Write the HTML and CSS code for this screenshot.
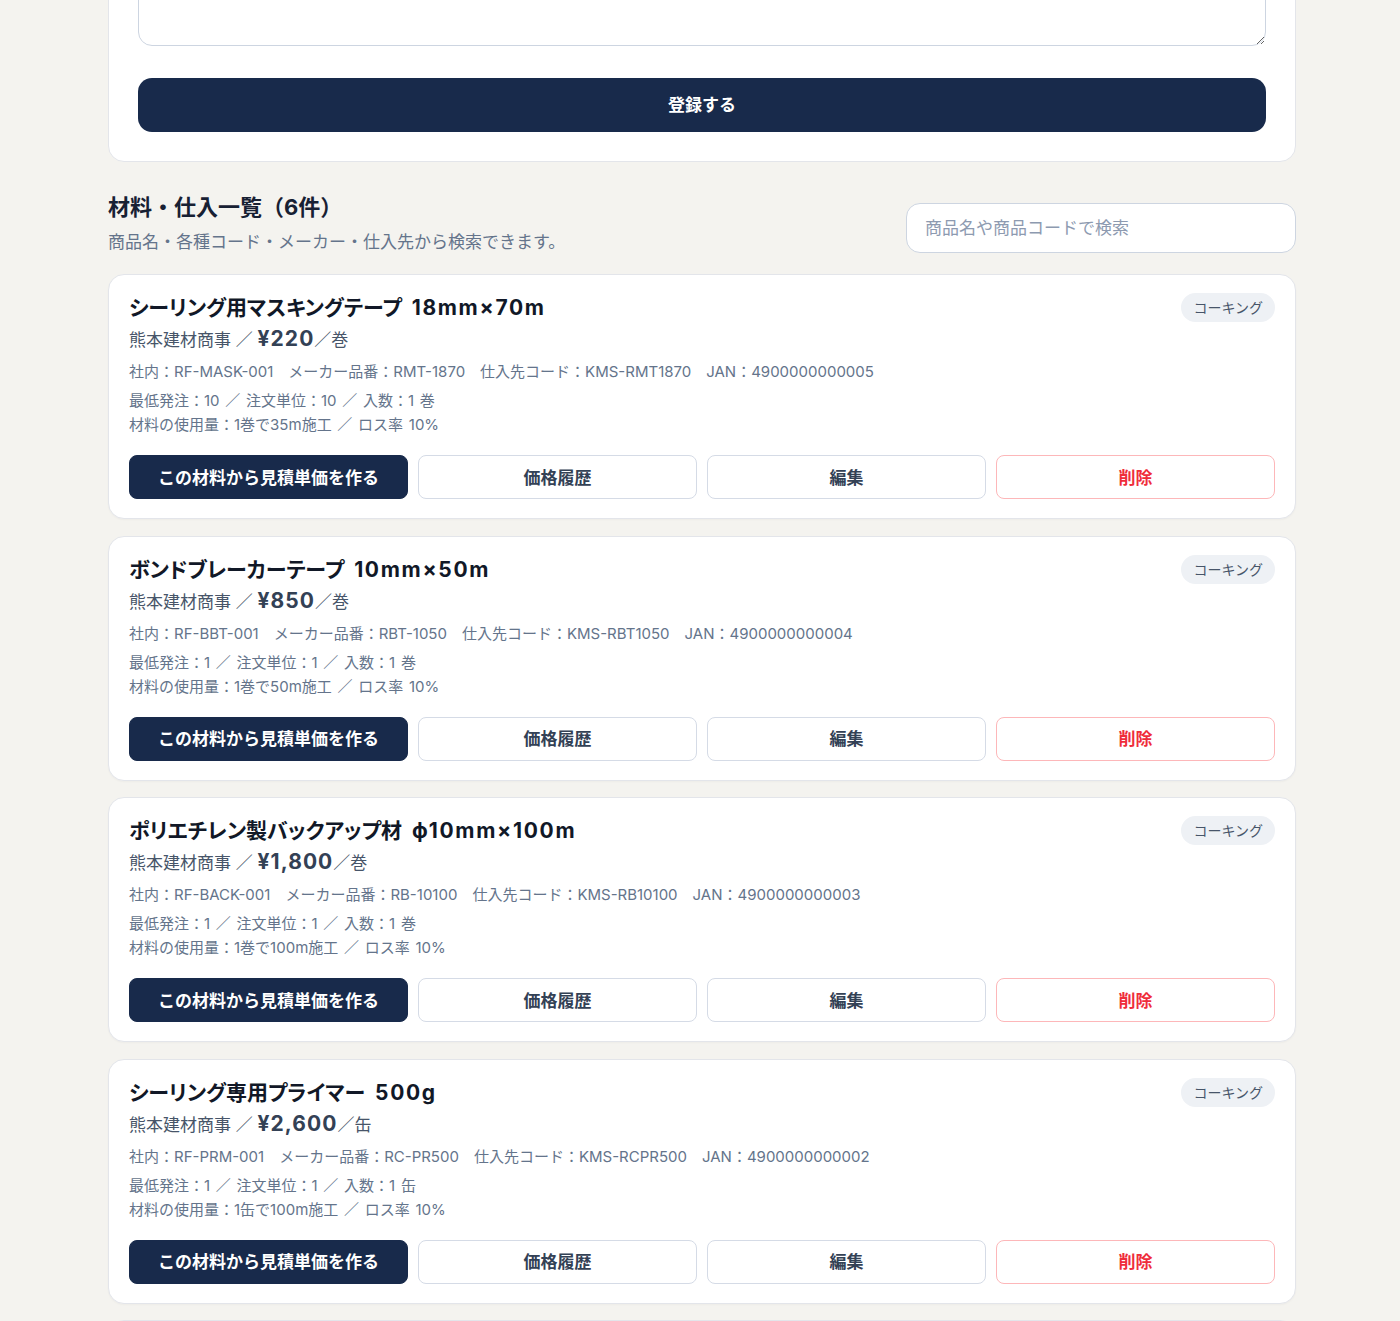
FILE: index.html
```html
<!DOCTYPE html>
<html lang="ja">
<head>
<meta charset="utf-8">
<title>材料・仕入一覧</title>
<link rel="stylesheet" href="styles.css">
</head>
<body>
<main class="page">
  <section class="form-card">
    <textarea class="memo" aria-label="メモ"></textarea>
    <button class="btn-submit" type="button">登録する</button>
  </section>

  <section class="list-head">
    <div class="list-title">
      <h2>材料・仕入一覧（6件）</h2>
      <p>商品名・各種コード・メーカー・仕入先から検索できます。</p>
    </div>
    <input class="search" type="text" placeholder="商品名や商品コードで検索">
  </section>

  <ul class="items">
    <li class="item">
      <div class="item-top">
        <h3>シーリング用マスキングテープ <span class="spec">18mm×70m</span></h3>
        <span class="tag">コーキング</span>
      </div>
      <p class="price">熊本建材商事 ／ <b>¥220</b>／巻</p>
      <p class="codes"><span>社内：RF-MASK-001</span><span>メーカー品番：RMT-1870</span><span>仕入先コード：KMS-RMT1870</span><span>JAN：4900000000005</span></p>
      <p class="meta">最低発注：10 ／ 注文単位：10 ／ 入数：1 巻</p>
      <p class="meta">材料の使用量：1巻で35m施工 ／ ロス率 10%</p>
      <div class="actions">
        <button class="btn btn-primary" type="button">この材料から見積単価を作る</button>
        <button class="btn" type="button">価格履歴</button>
        <button class="btn" type="button">編集</button>
        <button class="btn btn-danger" type="button">削除</button>
      </div>
    </li>
    <li class="item">
      <div class="item-top">
        <h3>ボンドブレーカーテープ <span class="spec">10mm×50m</span></h3>
        <span class="tag">コーキング</span>
      </div>
      <p class="price">熊本建材商事 ／ <b>¥850</b>／巻</p>
      <p class="codes"><span>社内：RF-BBT-001</span><span>メーカー品番：RBT-1050</span><span>仕入先コード：KMS-RBT1050</span><span>JAN：4900000000004</span></p>
      <p class="meta">最低発注：1 ／ 注文単位：1 ／ 入数：1 巻</p>
      <p class="meta">材料の使用量：1巻で50m施工 ／ ロス率 10%</p>
      <div class="actions">
        <button class="btn btn-primary" type="button">この材料から見積単価を作る</button>
        <button class="btn" type="button">価格履歴</button>
        <button class="btn" type="button">編集</button>
        <button class="btn btn-danger" type="button">削除</button>
      </div>
    </li>
    <li class="item">
      <div class="item-top">
        <h3>ポリエチレン製バックアップ材 <span class="spec">ϕ10mm×100m</span></h3>
        <span class="tag">コーキング</span>
      </div>
      <p class="price">熊本建材商事 ／ <b>¥1,800</b>／巻</p>
      <p class="codes"><span>社内：RF-BACK-001</span><span>メーカー品番：RB-10100</span><span>仕入先コード：KMS-RB10100</span><span>JAN：4900000000003</span></p>
      <p class="meta">最低発注：1 ／ 注文単位：1 ／ 入数：1 巻</p>
      <p class="meta">材料の使用量：1巻で100m施工 ／ ロス率 10%</p>
      <div class="actions">
        <button class="btn btn-primary" type="button">この材料から見積単価を作る</button>
        <button class="btn" type="button">価格履歴</button>
        <button class="btn" type="button">編集</button>
        <button class="btn btn-danger" type="button">削除</button>
      </div>
    </li>
    <li class="item">
      <div class="item-top">
        <h3>シーリング専用プライマー <span class="spec">500g</span></h3>
        <span class="tag">コーキング</span>
      </div>
      <p class="price">熊本建材商事 ／ <b>¥2,600</b>／缶</p>
      <p class="codes"><span>社内：RF-PRM-001</span><span>メーカー品番：RC-PR500</span><span>仕入先コード：KMS-RCPR500</span><span>JAN：4900000000002</span></p>
      <p class="meta">最低発注：1 ／ 注文単位：1 ／ 入数：1 缶</p>
      <p class="meta">材料の使用量：1缶で100m施工 ／ ロス率 10%</p>
      <div class="actions">
        <button class="btn btn-primary" type="button">この材料から見積単価を作る</button>
        <button class="btn" type="button">価格履歴</button>
        <button class="btn" type="button">編集</button>
        <button class="btn btn-danger" type="button">削除</button>
      </div>
    </li>
    <li class="item">
      <div class="item-top">
        <h3>変成シリコン系シーリング材 <span class="spec">320ml</span></h3>
        <span class="tag">コーキング</span>
      </div>
      <p class="price">熊本建材商事 ／ <b>¥680</b>／本</p>
      <p class="codes"><span>社内：RF-MS-001</span><span>メーカー品番：MS-320</span><span>仕入先コード：KMS-MS320</span><span>JAN：4900000000001</span></p>
      <p class="meta">最低発注：10 ／ 注文単位：10 ／ 入数：1 本</p>
      <p class="meta">材料の使用量：1本で8m施工 ／ ロス率 10%</p>
      <div class="actions">
        <button class="btn btn-primary" type="button">この材料から見積単価を作る</button>
        <button class="btn" type="button">価格履歴</button>
        <button class="btn" type="button">編集</button>
        <button class="btn btn-danger" type="button">削除</button>
      </div>
    </li>
  </ul>
</main>
</body>
</html>
```

FILE: styles.css
```css
* {
  box-sizing: border-box;
}

html,
body {
  margin: 0;
  padding: 0;
  background: #f4f3ef;
  font-family: Inter, "Noto Sans CJK JP", "Noto Sans", sans-serif;
  color: #1e293b;
}

.page {
  width: 1188px;
  margin: -76px auto 0 108px;
  display: flex;
  flex-direction: column;
}

/* entry form (scrolled to its bottom) */
.form-card {
  background: #fff;
  border: 1px solid #e3e5ea;
  border-radius: 16px;
  padding: 0 29px 29px;
  display: flex;
  flex-direction: column;
  gap: 32px;
}

.memo {
  display: block;
  width: 100%;
  height: 121px;
  border: 1px solid #cdd5e1;
  border-radius: 14px;
  font: inherit;
  resize: vertical;
}

.btn-submit {
  height: 54px;
  padding: 0 0 3px;
  border: 0;
  border-radius: 14px;
  background: #182a4b;
  color: #fff;
  font-family: inherit;
  font-size: 17px;
  font-weight: 700;
}

/* list header */
.list-head {
  display: flex;
  justify-content: space-between;
  align-items: flex-end;
  margin-top: 29px;
}

.list-title h2 {
  margin: 0;
  height: 32px;
  font-size: 22px;
  line-height: 32px;
  font-weight: 700;
  color: #172033;
}

.list-title p {
  margin: 6px 0 0;
  height: 26px;
  font-size: 17px;
  line-height: 26px;
  color: #64748b;
}

.search {
  width: 390px;
  height: 50px;
  margin-bottom: 2px;
  border: 1px solid #cdd5e1;
  border-radius: 14px;
  background: #fff;
  padding: 0 18px;
  font-family: inherit;
  font-size: 17px;
}

.search::placeholder {
  color: #8d9ab0;
}

/* material cards */
.items {
  list-style: none;
  margin: 19px 0 0;
  padding: 0;
  display: flex;
  flex-direction: column;
  gap: 16.5px;
}

.item {
  background: #fff;
  border: 1px solid #e3e5ea;
  border-radius: 16px;
  padding: 18px 20px 19px;
  box-shadow: 0 1px 2px rgba(15, 23, 42, 0.03);
}

.item p {
  margin: 0;
}

.item-top {
  display: flex;
  justify-content: space-between;
  align-items: flex-start;
  height: 30px;
}

.item-top h3 {
  margin: 0;
  font-size: 21px;
  line-height: 30px;
  font-weight: 700;
  color: #111827;
  font-feature-settings: "palt";
  word-spacing: 5px;
}

.spec {
  letter-spacing: 0.08em;
}

.tag {
  background: #eef1f5;
  color: #475569;
  border-radius: 999px;
  font-size: 14px;
  line-height: 29px;
  height: 29px;
  padding: 0 12px;
}

.item .price {
  margin-top: 3px;
  height: 28px;
  font-size: 17px;
  line-height: 28px;
  color: #475569;
}

.price b {
  color: #334155;
  font-weight: 700;
  font-size: 21px;
  line-height: 1;
  letter-spacing: 0.05em;
}

.item .codes {
  margin-top: 6px;
  height: 24px;
  font-size: 15px;
  line-height: 24px;
  color: #64748b;
  display: flex;
  gap: 15px;
}

.item .meta {
  height: 24px;
  font-size: 15px;
  line-height: 24px;
  word-spacing: 1.5px;
  color: #64748b;
}

.item .codes + .meta {
  margin-top: 5px;
}

.actions {
  margin-top: 18px;
  display: grid;
  grid-template-columns: repeat(4, 1fr);
  gap: 10px;
}

.btn {
  height: 44px;
  padding: 0 0 2px;
  border: 1px solid #d5dbe6;
  border-radius: 8px;
  background: #fff;
  color: #334155;
  font-family: inherit;
  font-size: 17px;
  font-weight: 700;
}

.btn-primary {
  background: #182a4b;
  border-color: #182a4b;
  color: #fff;
}

.btn-danger {
  border-color: #fdb7b9;
  color: #ef2d3b;
}
```
